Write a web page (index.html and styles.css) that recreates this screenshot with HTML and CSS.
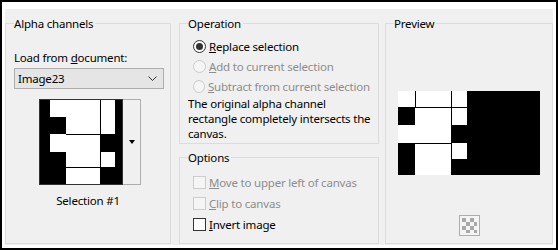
FILE: index.html
```html
<!DOCTYPE html>
<html lang="en">
<head>
    <meta charset="UTF-8">
    <title>Load Selection From Alpha Channel</title>
    <link rel="stylesheet" href="styles.css">
</head>
<body>
    <div class="frame">
        <div class="dialog">
            <fieldset class="group alpha">
                <legend>Alpha channels</legend>
                <div class="field-label">Load from <u>d</u>ocument:</div>
                <div class="select">
                    <span>Image23</span>
                    <svg class="chevron" width="9" height="5" viewBox="0 0 9 5"><polyline points="0.5,0.5 4.5,4.5 8.5,0.5" fill="none" stroke="#333" stroke-width="1"/></svg>
                </div>
                <div class="thumb">
                    <div class="thumb-img">
                        <svg width="82" height="84" viewBox="0 0 82 84">
                            <rect width="82" height="84" fill="#fff"/>
                            <rect x="0" y="0" width="10" height="84"/>
                            <rect x="10" y="17" width="16" height="17"/>
                            <rect x="10" y="52" width="16" height="32"/>
                            <rect x="75" y="0" width="7" height="84"/>
                            <rect x="60" y="34" width="15" height="18"/>
                            <rect x="60" y="67" width="15" height="17"/>
                            <rect x="60" y="0" width="1" height="34"/>
                            <rect x="26" y="34" width="34" height="1"/>
                            <rect x="26" y="67" width="34" height="1"/>
                            <rect x="60" y="52" width="1" height="15"/>
                        </svg>
                    </div>
                    <div class="thumb-btn"><span class="tri"></span></div>
                </div>
                <div class="thumb-caption">Selection #1</div>
            </fieldset>

            <div class="middle">
                <fieldset class="group operation">
                    <legend>Operation</legend>
                    <div class="choice"><span class="radio checked"></span><span><u>R</u>eplace selection</span></div>
                    <div class="choice disabled"><span class="radio"></span><span><u>A</u>dd to current selection</span></div>
                    <div class="choice disabled"><span class="radio"></span><span><u>S</u>ubtract from current selection</span></div>
                    <p class="note">The original alpha channel rectangle completely intersects the canvas.</p>
                </fieldset>
                <fieldset class="group options">
                    <legend>Options</legend>
                    <div class="check disabled"><span class="box"></span><span><u>M</u>ove to upper left of canvas</span></div>
                    <div class="check disabled"><span class="box"></span><span><u>C</u>lip to canvas</span></div>
                    <div class="check"><span class="box"></span><span><u>I</u>nvert image</span></div>
                </fieldset>
            </div>

            <fieldset class="group preview">
                <legend>Preview</legend>
                <svg class="preview-img" width="142" height="84" viewBox="0 0 142 84">
                    <rect width="142" height="84" fill="#fff"/>
                    <rect x="69" y="0" width="73" height="84"/>
                    <rect x="0" y="16" width="17" height="18"/>
                    <rect x="53" y="34" width="16" height="18"/>
                    <rect x="0" y="52" width="17" height="32"/>
                    <rect x="53" y="68" width="16" height="16"/>
                    <rect x="17" y="0" width="1" height="16"/>
                    <rect x="17" y="16" width="52" height="1"/>
                    <rect x="53" y="0" width="1" height="34"/>
                    <rect x="0" y="52" width="54" height="1"/>
                    <rect x="53" y="52" width="1" height="16"/>
                </svg>
                <div class="bg-button">
                    <svg width="19" height="19" viewBox="0 0 19 19">
                        <rect width="19" height="19" fill="#f4f4f4"/>
                        <rect x="2" y="2" width="4" height="4" fill="#a8a8a8"/>
                        <rect x="10" y="2" width="4" height="4" fill="#a8a8a8"/>
                        <rect x="6" y="6" width="4" height="4" fill="#a8a8a8"/>
                        <rect x="14" y="6" width="3" height="4" fill="#a8a8a8"/>
                        <rect x="2" y="10" width="4" height="4" fill="#a8a8a8"/>
                        <rect x="10" y="10" width="4" height="4" fill="#a8a8a8"/>
                        <rect x="6" y="14" width="4" height="3" fill="#a8a8a8"/>
                        <rect x="14" y="14" width="3" height="3" fill="#a8a8a8"/>
                    </svg>
                </div>
            </fieldset>
        </div>
    </div>
</body>
</html>
```

FILE: styles.css
```css
body {
    margin: 0;
    font-family: "Segoe UI", "Noto Sans", sans-serif;
    font-size: 11.5px;
    letter-spacing: -0.2px;
    line-height: 15px;
    color: #000;
}
.frame {
    width: 558px;
    height: 250px;
    box-sizing: border-box;
    border: 2px solid #000;
    background-color: #fff;
    padding: 7px 3px 3px 3px;
}
.dialog {
    height: 100%;
    box-sizing: border-box;
    background-color: #f0f0f0;
    padding: 7px 0 1px 0;
    display: flex;
}
.group {
    margin: 0;
    padding: 0 8px;
    border: 1px solid #dcdcdc;
    min-width: 0;
    box-sizing: border-box;
}
.group legend {
    padding: 0 2px 0 0;
}
.alpha {
    width: 166px;
    display: flex;
    flex-direction: column;
}
.middle {
    width: 200px;
    margin: 0 6px 0 8px;
    display: flex;
    flex-direction: column;
    gap: 6px;
}
.operation { height: 128px; }
.options { flex: 1; }
.preview {
    width: 168px;
    display: flex;
    flex-direction: column;
    align-items: center;
}

.field-label { margin-top: 19px; }
.select {
    margin-top: 3px;
    width: 150px;
    height: 21px;
    box-sizing: border-box;
    border: 1px solid #adadad;
    background-color: #e5e5e5;
    padding: 0 6px 0 3px;
    display: flex;
    align-items: center;
    justify-content: space-between;
    line-height: 19px;
}
.thumb {
    margin: 10px 0 0 25px;
    display: flex;
}
.thumb-img {
    border: 1px solid #333;
    height: 84px;
}
.thumb-img svg { display: block; }
.thumb-btn {
    width: 17px;
    border: 1px solid #adadad;
    border-left: none;
    background-color: #f0f0f0;
    display: flex;
    align-items: center;
    justify-content: center;
}
.tri {
    width: 0;
    height: 0;
    border-left: 3.5px solid transparent;
    border-right: 3.5px solid transparent;
    border-top: 4px solid #000;
}
.thumb-caption {
    margin-top: 8px;
    text-align: center;
}

.choice, .check {
    display: flex;
    align-items: center;
    gap: 3px;
    padding-left: 5px;
    height: 20px;
    white-space: nowrap;
}
.choice:first-of-type { margin-top: 5px; }
.check { height: 21px; }
.check:first-of-type { margin-top: 7px; }
.disabled { color: #8d8d8d; }
.radio {
    width: 13px;
    height: 13px;
    box-sizing: border-box;
    border: 1px solid #333;
    border-radius: 50%;
    background-color: #fff;
    display: flex;
    align-items: center;
    justify-content: center;
}
.radio.checked::after {
    content: "";
    width: 7px;
    height: 7px;
    border-radius: 50%;
    background-color: #333;
}
.disabled .radio {
    border-color: #cccccc;
    background-color: #f5f5f5;
}
.box {
    width: 13px;
    height: 13px;
    box-sizing: border-box;
    border: 1px solid #333;
    background-color: #fff;
}
.disabled .box {
    border-color: #cccccc;
    background-color: #f5f5f5;
}
.note {
    margin: 0 -6px 0 0;
}

.preview-img {
    display: block;
    margin-top: 60px;
}
.bg-button {
    margin-top: 40px;
    width: 21px;
    height: 21px;
    box-sizing: border-box;
    border: 1px solid #adadad;
}
.bg-button svg { display: block; }
```
